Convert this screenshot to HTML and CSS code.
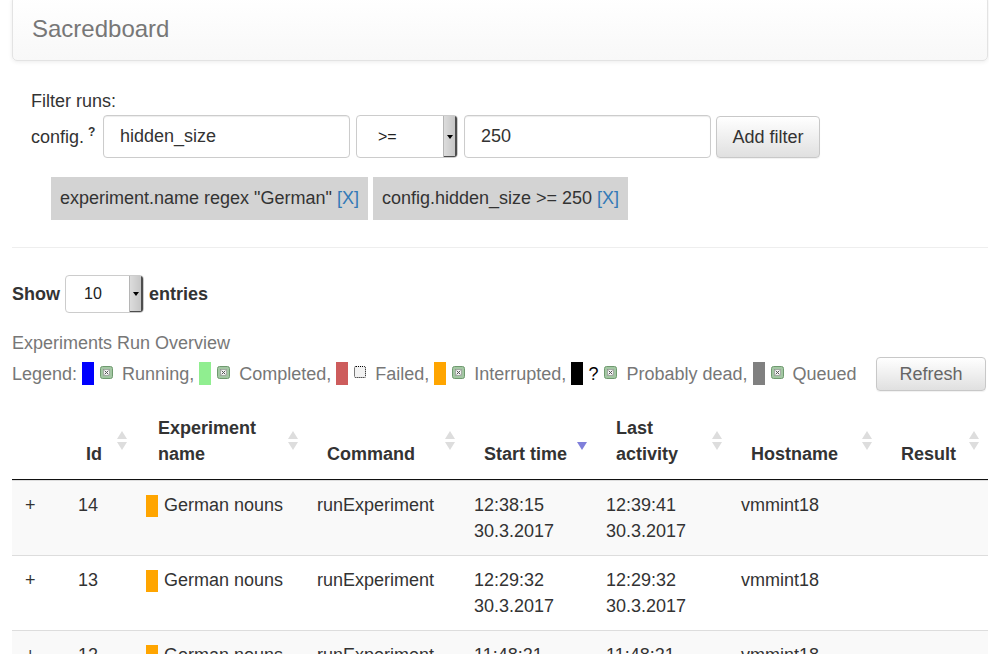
FILE: index.html
```html
<!DOCTYPE html>
<html lang="en">
<head>
<meta charset="utf-8">
<title>Sacredboard</title>
<link rel="stylesheet" href="styles.css">
</head>
<body>
<div class="navbar"><span class="brand">Sacredboard</span></div>
<div class="page">
  <div class="filters">
    <div class="filter-title">Filter runs:</div>
    <div class="filter-row">
      <label class="cfg">config.<sup>?</sup></label>
      <input class="field field-name" type="text" value="hidden_size">
      <div class="select sel-op"><span class="sel-text">&gt;=</span><span class="sel-arrow"></span></div>
      <input class="field field-val" type="text" value="250">
      <button class="btn add">Add filter</button>
    </div>
    <ul class="chips">
      <li>experiment.name regex "German" <a href="#">[X]</a></li>
      <li>config.hidden_size &gt;= 250 <a href="#">[X]</a></li>
    </ul>
  </div>
  <hr class="sep">
  <div class="show-row">
    <span>Show</span>
    <div class="select sel-len"><span class="sel-text">10</span><span class="sel-arrow"></span></div>
    <span>entries</span>
  </div>
  <div class="overview">Experiments Run Overview</div>
  <div class="legend-row">
    <div class="legend">Legend: <span class="lb blue"></span> <svg class="ic" width="13" height="13" viewBox="0 0 13 13"><rect x="0.5" y="0.5" width="12" height="12" rx="2" fill="#a3c7a3" stroke="#6f9a6f"/><rect x="3.5" y="3.5" width="6" height="6" fill="#f3f3f3" stroke="#8a8a8a" stroke-width="0.6"/><path d="M4.7 4.7l3.6 3.6M8.3 4.7l-3.6 3.6" stroke="#555" stroke-width="1"/></svg> Running, <span class="lb green"></span> <svg class="ic" width="13" height="13" viewBox="0 0 13 13"><rect x="0.5" y="0.5" width="12" height="12" rx="2" fill="#a3c7a3" stroke="#6f9a6f"/><rect x="3.5" y="3.5" width="6" height="6" fill="#f3f3f3" stroke="#8a8a8a" stroke-width="0.6"/><path d="M4.7 4.7l3.6 3.6M8.3 4.7l-3.6 3.6" stroke="#555" stroke-width="1"/></svg> Completed, <span class="lb red"></span> <span class="dotbox"></span> Failed, <span class="lb orange"></span> <svg class="ic" width="13" height="13" viewBox="0 0 13 13"><rect x="0.5" y="0.5" width="12" height="12" rx="2" fill="#a3c7a3" stroke="#6f9a6f"/><rect x="3.5" y="3.5" width="6" height="6" fill="#f3f3f3" stroke="#8a8a8a" stroke-width="0.6"/><path d="M4.7 4.7l3.6 3.6M8.3 4.7l-3.6 3.6" stroke="#555" stroke-width="1"/></svg> Interrupted, <span class="lb black"></span> <span class="q">?</span> <svg class="ic" width="13" height="13" viewBox="0 0 13 13"><rect x="0.5" y="0.5" width="12" height="12" rx="2" fill="#a3c7a3" stroke="#6f9a6f"/><rect x="3.5" y="3.5" width="6" height="6" fill="#f3f3f3" stroke="#8a8a8a" stroke-width="0.6"/><path d="M4.7 4.7l3.6 3.6M8.3 4.7l-3.6 3.6" stroke="#555" stroke-width="1"/></svg> Probably dead, <span class="lb gray"></span> <svg class="ic" width="13" height="13" viewBox="0 0 13 13"><rect x="0.5" y="0.5" width="12" height="12" rx="2" fill="#a3c7a3" stroke="#6f9a6f"/><rect x="3.5" y="3.5" width="6" height="6" fill="#f3f3f3" stroke="#8a8a8a" stroke-width="0.6"/><path d="M4.7 4.7l3.6 3.6M8.3 4.7l-3.6 3.6" stroke="#555" stroke-width="1"/></svg> Queued</div>
    <button class="btn refresh">Refresh</button>
  </div>
  <table class="runs">
    <colgroup>
      <col class="c0"><col class="c1"><col class="c2"><col class="c3"><col class="c4"><col class="c5"><col class="c6"><col class="c7">
    </colgroup>
    <thead>
      <tr>
        <th class="nosort"></th>
        <th class="id">Id<span class="sort"></span></th>
        <th class="exp">Experiment name<span class="sort"></span></th>
        <th>Command<span class="sort"></span></th>
        <th>Start time<span class="sort desc"></span></th>
        <th>Last activity<span class="sort"></span></th>
        <th>Hostname<span class="sort"></span></th>
        <th>Result<span class="sort"></span></th>
      </tr>
    </thead>
    <tbody>
      <tr>
        <td class="expand">+</td><td>14</td><td><span class="st"></span>German nouns</td><td>runExperiment</td><td>12:38:15<br>30.3.2017</td><td>12:39:41<br>30.3.2017</td><td>vmmint18</td><td></td>
      </tr>
      <tr>
        <td class="expand">+</td><td>13</td><td><span class="st"></span>German nouns</td><td>runExperiment</td><td>12:29:32<br>30.3.2017</td><td>12:29:32<br>30.3.2017</td><td>vmmint18</td><td></td>
      </tr>
      <tr>
        <td class="expand">+</td><td>12</td><td><span class="st"></span>German nouns</td><td>runExperiment</td><td>11:48:21<br>30.3.2017</td><td>11:48:21<br>30.3.2017</td><td>vmmint18</td><td></td>
      </tr>
      <tr>
        <td class="expand">+</td><td>11</td><td><span class="st"></span>German nouns</td><td>runExperiment</td><td>11:40:02<br>30.3.2017</td><td>11:40:02<br>30.3.2017</td><td>vmmint18</td><td></td>
      </tr>
    </tbody>
  </table>
</div>
</body>
</html>
```
FILE: styles.css
```css
html, body {
  margin: 0;
  padding: 0;
}
body {
  font-family: "Liberation Sans", Arial, sans-serif;
  font-size: 18px;
  line-height: 26px;
  color: #333;
  background: #fff;
}
.navbar {
  box-sizing: border-box;
  margin: -4px 1px 0 12px;
  height: 65px;
  border: 1px solid #e3e3e3;
  border-radius: 5px;
  background: linear-gradient(#fff, #f8f8f8);
  box-shadow: 0 1px 4px rgba(0, 0, 0, 0.08);
  display: flex;
  align-items: center;
  padding: 0 18px 0 19px;
}
.brand {
  font-size: 24px;
  color: #777;
}
.page {
  margin: 0 1px 0 12px;
}
.filters {
  padding-left: 19px;
}
.filter-title {
  margin-top: 27px;
}
.filter-row {
  display: flex;
  align-items: center;
  margin-top: 1px;
  height: 43px;
}
.cfg {
  width: 72px;
  flex: none;
}
.cfg sup {
  font-size: 12px;
  font-weight: bold;
  line-height: 0;
  margin-left: 4px;
  vertical-align: 7px;
}
.field {
  box-sizing: border-box;
  height: 43px;
  border: 1px solid #ccc;
  border-radius: 4px;
  padding: 0 16px;
  font: inherit;
  color: #333;
  box-shadow: inset 0 1px 1px rgba(0, 0, 0, 0.075);
  outline: none;
}
.field-name {
  width: 247px;
  margin-right: 6px;
}
.field-val {
  width: 247px;
  margin-right: 5px;
}
.select {
  box-sizing: border-box;
  display: flex;
  border: 1px solid #ccc;
  border-radius: 4px;
  background: #fff;
  overflow: hidden;
}
.sel-op {
  width: 102px;
  height: 43px;
  margin-right: 6px;
}
.sel-len {
  width: 79px;
  height: 38px;
  font-weight: normal;
}
.sel-text {
  flex: 1;
  align-self: center;
  font-size: 16px;
  color: #222;
}
.sel-op .sel-text {
  padding-left: 21px;
}
.sel-len .sel-text {
  padding-left: 18px;
}
.sel-arrow {
  width: 13px;
  flex: none;
  display: flex;
  align-items: center;
  justify-content: center;
  background: linear-gradient(to right, #dcdcdc, #c2c2c2);
  border-left: 1px solid #b5b5b5;
  box-shadow: inset -2px -1px 0 #4d4d4d;
}
.sel-arrow::after {
  content: "";
  border-left: 3px solid transparent;
  border-right: 3px solid transparent;
  border-top: 4px solid #000;
  margin-right: 2px;
}
.btn {
  box-sizing: border-box;
  border: 1px solid #c8c8c8;
  border-radius: 4px;
  background: linear-gradient(#fff, #e0e0e0);
  font: inherit;
  color: #333;
  box-shadow: 0 1px 1px rgba(0, 0, 0, 0.06);
  cursor: pointer;
}
.add {
  height: 42px;
  width: 104px;
  padding: 0;
}
.chips {
  list-style: none;
  margin: 19px 0 0 20px;
  padding: 0;
  display: flex;
  gap: 5px;
}
.chips li {
  background: #d3d3d3;
  padding: 0 9px;
  line-height: 43px;
}
.chips a {
  color: #337ab7;
  text-decoration: none;
}
.sep {
  margin: 27px 0 0;
  border: 0;
  border-top: 1px solid #eee;
  height: 0;
}
.show-row {
  display: flex;
  align-items: center;
  gap: 5px;
  margin-top: 27px;
  font-weight: bold;
}
.overview {
  margin-top: 17px;
  color: #777;
}
.legend-row {
  display: flex;
  align-items: center;
  justify-content: space-between;
  margin-top: 1px;
  height: 34px;
}
.legend {
  color: #777;
  white-space: nowrap;
}
.lb {
  display: inline-block;
  width: 12px;
  height: 23px;
  vertical-align: middle;
  margin-top: -3px;
}
.blue { background: #0000ff; }
.green { background: #90ee90; }
.red { background: #cd5c5c; }
.orange { background: #ffa500; }
.black { background: #000; }
.gray { background: #808080; }
.ic {
  vertical-align: middle;
  margin: -6px 4px 0 1px;
}
.dotbox {
  display: inline-block;
  box-sizing: border-box;
  width: 12px;
  height: 12px;
  border: 1px dotted #000;
  border-radius: 2px;
  background: #f2f2f2;
  vertical-align: middle;
  margin: -6px 4px 0 1px;
}
.q {
  color: #000;
}
.refresh {
  width: 110px;
  height: 34px;
  padding: 0;
  color: #666;
  margin-right: 2px;
}
.runs {
  width: 976px;
  table-layout: fixed;
  border-collapse: separate;
  border-spacing: 0;
  margin-top: 14px;
}
.c0 { width: 56px; }
.c1 { width: 68px; }
.c2 { width: 171px; }
.c3 { width: 157px; }
.c4 { width: 132px; }
.c5 { width: 135px; }
.c6 { width: 150px; }
.c7 { width: 107px; }
.runs th {
  position: relative;
  text-align: left;
  vertical-align: bottom;
  padding: 10px 22px 12px 20px;
  border-bottom: 1px solid #111;
  font-weight: bold;
  color: #333;
}
.runs th.id {
  padding-left: 18px;
}
.runs th.exp {
  padding-left: 22px;
}
.sort {
  position: absolute;
  right: 8px;
  top: 50%;
  margin-top: -11px;
  width: 11px;
  height: 20px;
}
.sort::before,
.sort::after {
  content: "";
  position: absolute;
  left: 0;
  border-left: 5.5px solid transparent;
  border-right: 5.5px solid transparent;
}
.sort::before {
  top: 0;
  border-bottom: 8px solid #ddd;
}
.sort::after {
  top: 11px;
  border-top: 8px solid #ddd;
}
.sort.desc::before {
  display: none;
}
.sort.desc::after {
  border-top-color: #7f7fda;
}
.runs td {
  padding: 11px 10px;
  border-top: 1px solid #ddd;
  vertical-align: top;
}
.runs td.expand {
  padding-left: 13px;
}
.runs tbody tr:nth-child(odd) td {
  background: #f9f9f9;
}
.st {
  display: inline-block;
  width: 12px;
  height: 22px;
  background: #ffa500;
  vertical-align: top;
  margin: 3px 6px 0 0;
}
```
